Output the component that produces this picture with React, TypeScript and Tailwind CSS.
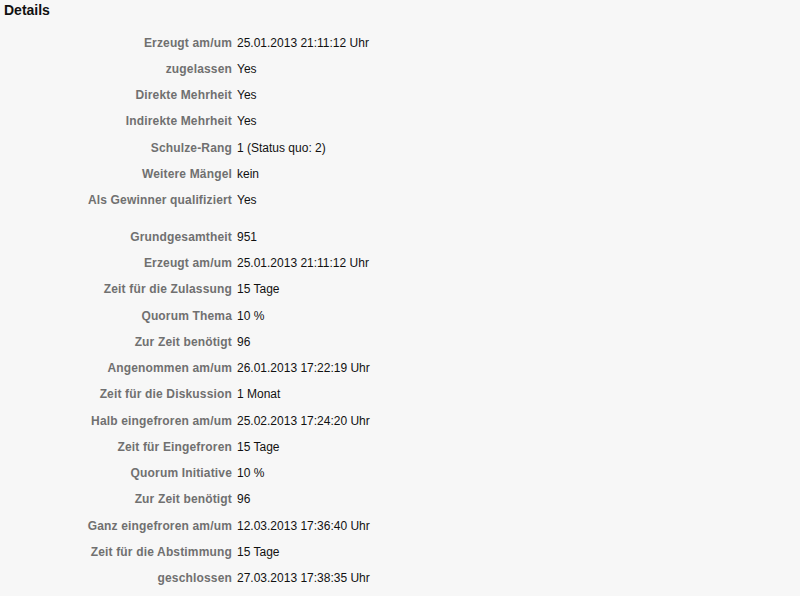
import React from "react";

type Row = [string, string];

const group1: Row[] = [
  ["Erzeugt am/um", "25.01.2013 21:11:12 Uhr"],
  ["zugelassen", "Yes"],
  ["Direkte Mehrheit", "Yes"],
  ["Indirekte Mehrheit", "Yes"],
  ["Schulze-Rang", "1 (Status quo: 2)"],
  ["Weitere Mängel", "kein"],
  ["Als Gewinner qualifiziert", "Yes"],
];

const group2: Row[] = [
  ["Grundgesamtheit", "951"],
  ["Erzeugt am/um", "25.01.2013 21:11:12 Uhr"],
  ["Zeit für die Zulassung", "15 Tage"],
  ["Quorum Thema", "10 %"],
  ["Zur Zeit benötigt", "96"],
  ["Angenommen am/um", "26.01.2013 17:22:19 Uhr"],
  ["Zeit für die Diskussion", "1 Monat"],
  ["Halb eingefroren am/um", "25.02.2013 17:24:20 Uhr"],
  ["Zeit für Eingefroren", "15 Tage"],
  ["Quorum Initiative", "10 %"],
  ["Zur Zeit benötigt", "96"],
  ["Ganz eingefroren am/um", "12.03.2013 17:36:40 Uhr"],
  ["Zeit für die Abstimmung", "15 Tage"],
  ["geschlossen", "27.03.2013 17:38:35 Uhr"],
];

function Rows({ rows }: { rows: Row[] }) {
  return (
    <div className="flex flex-col">
      {rows.map(([l, v], i) => (
        <div key={i} className="flex items-center h-[26.25px] text-[12px] leading-[15px]">
          <div className="w-[232px] shrink-0 text-right font-bold tracking-[0.16px] text-[#707070]">{l}</div>
          <div className="ml-[5px] text-[#111111]">{v}</div>
        </div>
      ))}
    </div>
  );
}

export default function App() {
  return (
    <div
      className="w-[800px] h-[596px] overflow-hidden bg-[#f7f7f7]"
      style={{ fontFamily: '"Liberation Sans", Arial, Helvetica, sans-serif' }}
    >
      <div className="h-[30px] pl-[4px] pt-[2px] text-[14px] leading-[17px] font-bold text-[#111111]">
        Details
      </div>
      <Rows rows={group1} />
      <div className="h-[10.5px]" />
      <Rows rows={group2} />
    </div>
  );
}
